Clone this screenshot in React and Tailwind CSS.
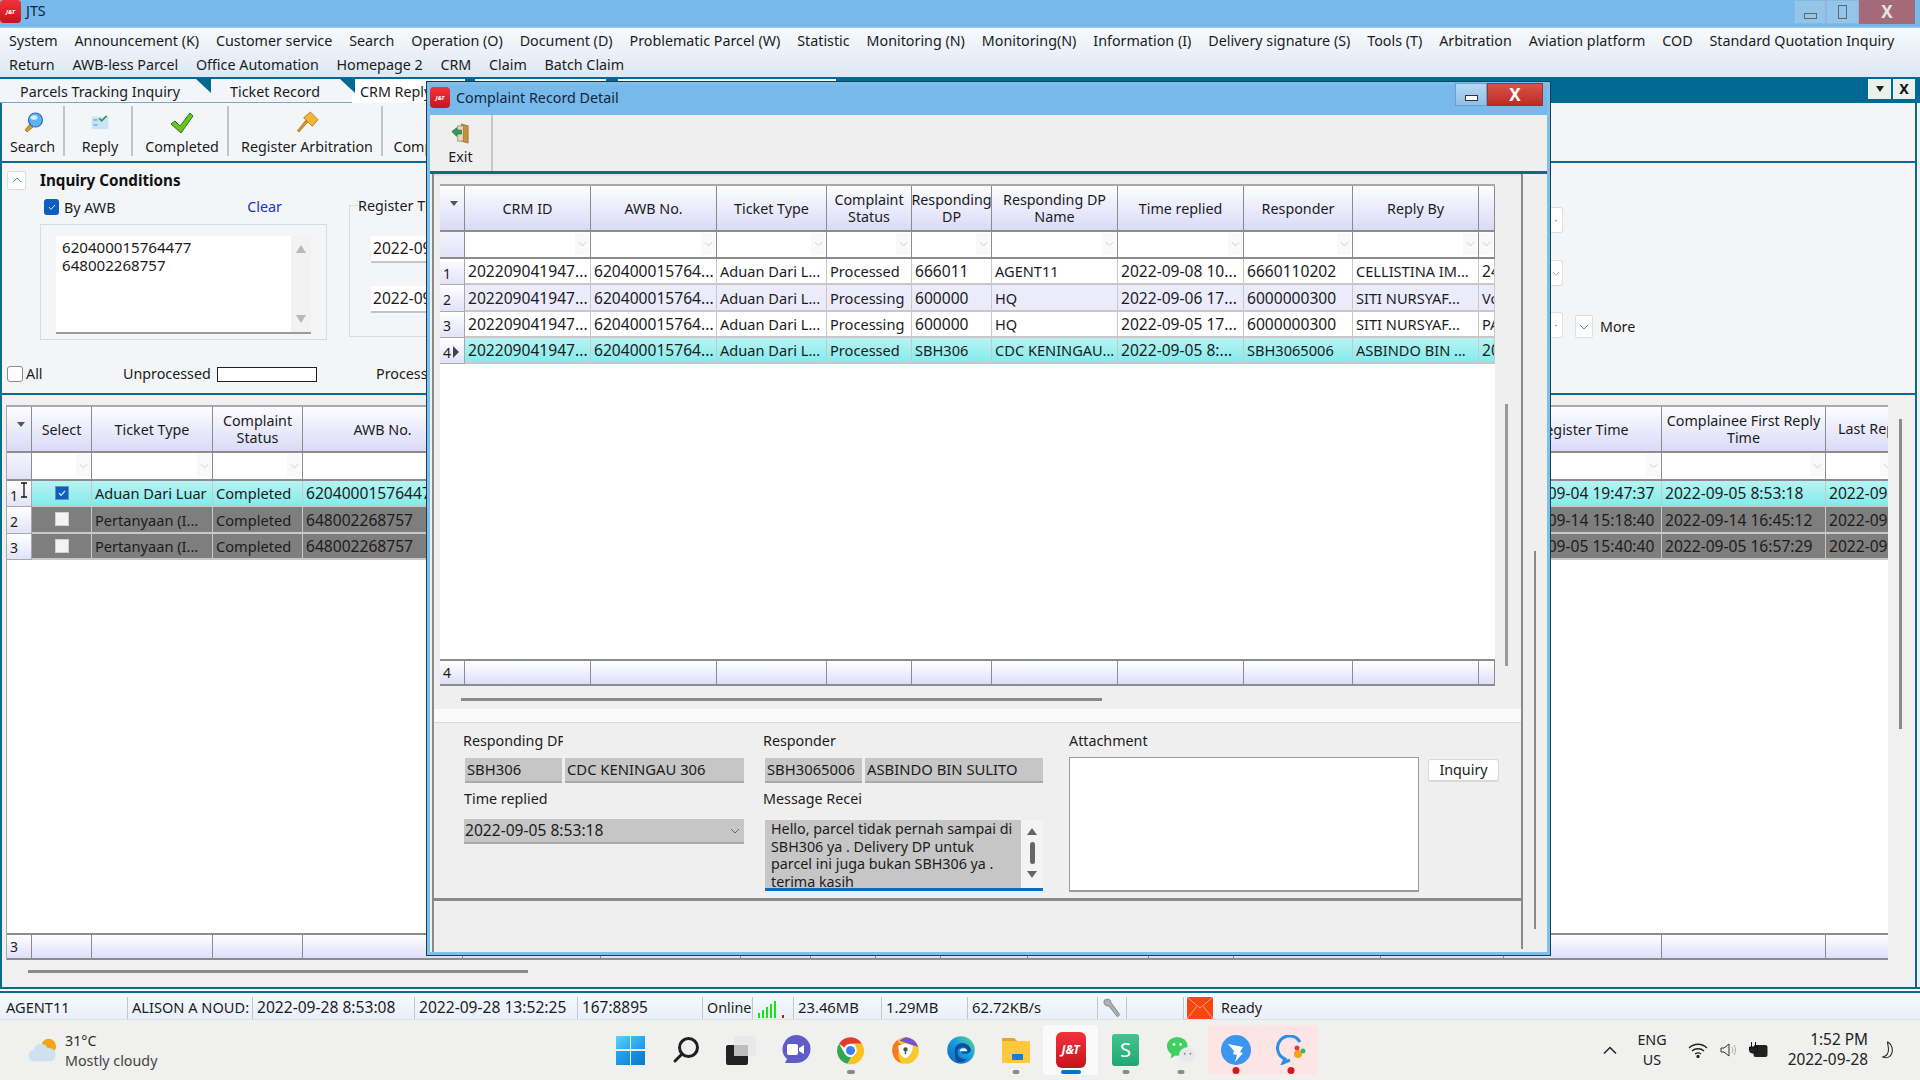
import React from "react";

const Chev = ({ className = "" }) => (
  <svg viewBox="0 0 10 6" className={className} fill="none" stroke="currentColor" strokeWidth="1"><path d="M1 1l4 4 4-4" /></svg>
);

const JT = ({ className = "", text = "text-[7px]" }) => (
  <div className={"flex items-center justify-center rounded-[4px] bg-gradient-to-b from-[#f2323c] to-[#c9101c] font-bold italic text-white leading-none " + text + " " + className}>J&amp;T</div>
);

const FilterCell = () => (
  <div className="relative border-r border-b-2 border-[#8c8c8c] bg-white">
    <div className="absolute right-[1px] top-[1px] bottom-[2px] w-[14px] flex items-center justify-center bg-[#f9f9f9] text-[#c9c9c9]"><Chev className="w-[9px] h-[6px]" /></div>
  </div>
);

const Head = ({ children, className = "" }) => (
  <div className={"flex items-center justify-center overflow-hidden text-center leading-[17px] border-r border-b-2 border-[#8c8c8c] bg-gradient-to-b from-[#fdfdff] to-[#dadaf8] " + className}>{children}</div>
);

const Corner = () => (
  <div className="flex justify-end pt-[15px] pr-[6px] border-r border-b-2 border-[#8c8c8c] bg-gradient-to-b from-[#fdfdff] to-[#dadaf8]">
    <div className="w-0 h-0 border-x-[4px] border-x-transparent border-t-[5px] border-t-[#555]" />
  </div>
);

const RowHead = ({ children, arrow }) => (
  <div className="flex items-center pl-[3px] pt-[3px] text-[14px] border-r border-b border-[#a8a8a8] bg-gradient-to-b from-white to-[#e2e2f8]">
    {children}
    {arrow && <span className="ml-[2px] w-0 h-0 border-y-[6px] border-y-transparent border-l-[6px] border-l-[#444]" />}
  </div>
);

const Cell = ({ children, tone = "" }) => (
  <div className={"overflow-hidden whitespace-nowrap pl-[3px] pt-[2px] flex items-center border-r border-b-2 border-[#c8c8c8] " + tone + (typeof children === "string" && /^\d/.test(children) ? " text-[15.6px]" : " text-[14.6px]")}>{children}</div>
);

const SEL = "bg-gradient-to-b from-[#b6f3f3] to-[#84ebeb]";

const FootCell = ({ children }) => (
  <div className="flex items-center pl-[3px] border-r border-t-2 border-b-2 border-[#8c8c8c] text-[14px] bg-gradient-to-b from-white to-[#dedefa]">{children}</div>
);

const Check = ({ on }) => on ? (
  <div className="w-[14px] h-[14px] flex items-center justify-center bg-[#0e5ec0] border border-[#6f8fb4]">
    <svg viewBox="0 0 10 10" className="w-[10px] h-[10px]" fill="none" stroke="#d5e8ff" strokeWidth="1.2"><path d="M2 5l2 2.4L8 3" /></svg>
  </div>
) : <div className="w-[14px] h-[14px] bg-[#f3f3f3] border border-[#d0d0d0]" />;

const MAIN_COLS = "grid-cols-[25px_60px_121px_90px_160px_138px_140px_70px_65px_65px_87px_121px_85px_147px_123px_158px_164px_70px]";

const mainHeads = ["Select", "Ticket Type", "Complaint Status", "AWB No.", "", "", "", "", "", "", "", "", "", "", "Register Time", "Complainee First Reply Time"];

const mainRows = [
  { sel: true, no: "1", on: true, t: "Aduan Dari Luar", a: "620400015764477", r: "2022-09-04 19:47:37", f: "2022-09-05 8:53:18" },
  { no: "2", t: "Pertanyaan (I...", a: "648002268757", r: "2022-09-14 15:18:40", f: "2022-09-14 16:45:12" },
  { no: "3", t: "Pertanyaan (I...", a: "648002268757", r: "2022-09-05 15:40:40", f: "2022-09-05 16:57:29" },
];

function MainGrid() {
  const blanks = Array.from({ length: 10 });
  return (
    <div className="flex-1 flex flex-col w-[1882px] ml-[4px] mt-[10px] border-t-2 border-l border-[#a8a8a8] bg-white overflow-hidden">
      <div className={"grid grid-rows-[46px_28px_26.3px_26.3px_26.3px] " + MAIN_COLS}>
        <Corner />
        {mainHeads.map((h, i) => <Head key={i}>{h}</Head>)}
        <div className="flex items-center pl-[12px] border-r border-b-2 border-[#8c8c8c] bg-gradient-to-b from-[#fdfdff] to-[#dadaf8] whitespace-nowrap">Last Reply</div>
        <div className="border-r border-b-2 border-[#8c8c8c] bg-gradient-to-b from-[#f4f4ff] to-[#e2e2f8]" />
        {mainHeads.map((_, i) => <FilterCell key={i} />)}
        <FilterCell />
        {mainRows.map((r) => {
          const tone = r.sel ? SEL : "bg-[#7e7e7e]";
          return (
            <React.Fragment key={r.no}>
              <RowHead>{r.no}</RowHead>
              <div className={"flex items-center justify-center border-r border-b-2 border-[#c8c8c8] " + tone}><Check on={r.on} /></div>
              <Cell tone={tone}>{r.t}</Cell>
              <Cell tone={tone}>Completed</Cell>
              <Cell tone={tone}>{r.a}</Cell>
              {blanks.map((_, i) => <Cell key={i} tone={tone} />)}
              <Cell tone={tone}>{r.r}</Cell>
              <Cell tone={tone}>{r.f}</Cell>
              <Cell tone={tone}>2022-09-05 17:00:00</Cell>
            </React.Fragment>
          );
        })}
      </div>
      <div className="flex-1" />
      <div className={"grid h-[27px] " + MAIN_COLS}>
        <FootCell>3</FootCell>
        {Array.from({ length: 17 }).map((_, i) => <FootCell key={i} />)}
      </div>
    </div>
  );
}

const DLG_COLS = "grid-cols-[25px_126px_126px_110px_85px_80px_126px_126px_109px_126px_16px]";
const dlgHeads = ["CRM ID", "AWB No.", "Ticket Type", "Complaint Status", "Responding DP", "Responding DP Name", "Time replied", "Responder", "Reply By", ""];
const dlgRows = [
  ["1", "Processed", "666011", "AGENT11", "2022-09-08 10...", "6660110202", "CELLISTINA IM...", "2400"],
  ["2", "Processing", "600000", "HQ", "2022-09-06 17...", "6000000300", "SITI NURSYAF...", "Vo"],
  ["3", "Processing", "600000", "HQ", "2022-09-05 17...", "6000000300", "SITI NURSYAF...", "PA"],
  ["4", "Processed", "SBH306", "CDC KENINGAU...", "2022-09-05 8:...", "SBH3065006", "ASBINDO BIN ...", "2022"],
];

function DialogGrid() {
  return (
    <div className="w-[1055px] h-[502px] flex flex-col bg-white border-t-2 border-[#a8a8a8] overflow-hidden">
      <div className={"grid grid-rows-[46px_27px_26.3px_26.3px_26.3px_26.3px] " + DLG_COLS}>
        <Corner />
        {dlgHeads.map((h, i) => (
          <Head key={i} className={i === 4 ? "whitespace-nowrap" : ""}>{i === 4 ? <span>Responding<br />DP</span> : h}</Head>
        ))}
        <div className="border-r border-b-2 border-[#8c8c8c] bg-gradient-to-b from-[#f4f4ff] to-[#e2e2f8]" />
        {dlgHeads.map((_, i) => <FilterCell key={i} />)}
        {dlgRows.map((r, n) => {
          const tone = n === 3 ? SEL : n === 1 ? "bg-[#ebebfb]" : "bg-white";
          return (
            <React.Fragment key={r[0]}>
              <RowHead arrow={n === 3}>{r[0]}</RowHead>
              <Cell tone={tone}>202209041947...</Cell>
              <Cell tone={tone}>620400015764...</Cell>
              <Cell tone={tone}>Aduan Dari L...</Cell>
              <Cell tone={tone}>{r[1]}</Cell>
              <Cell tone={tone}>{r[2]}</Cell>
              <Cell tone={tone}>{r[3]}</Cell>
              <Cell tone={tone}>{r[4]}</Cell>
              <Cell tone={tone}>{r[5]}</Cell>
              <Cell tone={tone}>{r[6]}</Cell>
              <Cell tone={tone}>{r[7]}</Cell>
            </React.Fragment>
          );
        })}
      </div>
      <div className="flex-1" />
      <div className={"grid h-[27px] " + DLG_COLS}>
        <FootCell>4</FootCell>
        {dlgHeads.map((_, i) => <FootCell key={i} />)}
      </div>
    </div>
  );
}

const ReadOnly = ({ className = "", children }) => (
  <div className={"h-[25px] flex items-center pl-[2px] text-[14.8px] bg-[#c6c6c6] border-b-2 border-[#a9a9a9] whitespace-nowrap overflow-hidden " + className}>{children}</div>
);

function Dialog() {
  return (
    <div className="absolute left-[427px] top-[82px] w-[1123px] h-[873px] flex flex-col bg-[#efefef] border-[3px] border-[#7fbfec] outline outline-1 outline-[#14404f]">
      <div className="h-[30px] shrink-0 flex items-start bg-[#78b9ec] relative">
        <JT className="w-[20px] h-[21px] mt-[2px]" text="text-[6px]" />
        <span className="ml-[6px] mt-[2px] text-[#12263a]">Complaint Record Detail</span>
        <div className="ml-auto mr-[4px] -mt-[2px] flex h-[23px]">
          <div className="w-[32px] flex items-end justify-center pb-[4px] bg-gradient-to-b from-[#b7d8f2] to-[#8dc0ea] border border-[#6f9fc6]"><span className="w-[13px] h-[6px] border border-[#333] bg-white" /></div>
          <div className="w-[56px] flex items-center justify-center font-bold text-white bg-gradient-to-b from-[#d9534b] to-[#bd2a25] border border-[#8e3a38] text-[17px]">X</div>
        </div>
      </div>
      <div className="h-[59px] shrink-0 flex border-b-[3px] border-[#0b6a8f]">
        <div className="w-[63px] flex flex-col items-center pt-[7px] border-r-2 border-[#c6c6c6]">
          <svg viewBox="0 0 24 24" className="w-[23px] h-[23px]">
            <path d="M13 2l7 2v18l-7-2z" fill="#c98f3a" stroke="#7c5a20" strokeWidth=".6" />
            <path d="M9 4h6v16H9z" fill="#e5d9ba" stroke="#7c6a40" strokeWidth=".6" />
            <path d="M3 10l5-4v2.5h5v4H8V15z" fill="#2fa055" stroke="#15592c" strokeWidth=".6" />
          </svg>
          <span className="mt-[2px] leading-[20px]">Exit</span>
        </div>
      </div>
      <div className="flex-1 flex min-h-0">
        <div className="ml-[2px] w-[1089px] border-l-2 border-[#8a8a8a] flex flex-col">
          <div className="h-[727px] shrink-0 flex flex-col border-t-2 border-[#e2e2e2] border-b-[3px] border-b-[#8a8a8a]">
            <div className="h-[543px] flex pl-[6px] pt-[8px]">
              <DialogGrid />
              <div className="w-[26px] pt-[220px] pl-[10px]">
                <div className="w-[3px] h-[262px] bg-[#9a9a9a]" />
              </div>
            </div>
            <div className="h-[3px] ml-[27px] w-[641px] bg-[#8a8a8a] -mt-[21px]" />
            <div className="mt-[8px] h-[14px] bg-[#fafafa] border-b border-[#dcdcdc]" />
            <div className="flex-1 flex pl-[29px] pt-[8px]">
              <div className="w-[300px]">
                <div className="w-[100px] overflow-hidden whitespace-nowrap leading-[20px]">Responding DP</div>
                <div className="mt-[7px] flex gap-[3px] ml-[2px]">
                  <ReadOnly className="w-[97px]">SBH306</ReadOnly>
                  <ReadOnly className="w-[179px]">CDC KENINGAU 306</ReadOnly>
                </div>
                <div className="mt-[6px] leading-[20px] ml-[1px]">Time replied</div>
                <div className="mt-[10px] ml-[1px] w-[280px] h-[25px] flex items-center justify-between pl-[1px] pr-[4px] text-[15.6px] bg-[#c6c6c6] border-b-2 border-[#a9a9a9]">
                  <span>2022-09-05 8:53:18</span>
                  <Chev className="w-[10px] h-[6px] text-[#666]" />
                </div>
              </div>
              <div className="w-[306px]">
                <div className="leading-[20px]">Responder</div>
                <div className="mt-[7px] flex gap-[3px] ml-[2px]">
                  <ReadOnly className="w-[97px]">SBH3065006</ReadOnly>
                  <ReadOnly className="w-[178px]">ASBINDO BIN SULITO</ReadOnly>
                </div>
                <div className="mt-[6px] w-[99px] overflow-hidden whitespace-nowrap leading-[20px]">Message Received</div>
                <div className="mt-[11px] ml-[2px] w-[278px] h-[71px] flex overflow-hidden bg-[#c6c6c6] border-b-[3px] border-[#0a6cc4]">
                  <div className="flex-1 pl-[6px] pr-[7px] leading-[17.5px]">Hello, parcel tidak pernah sampai di SBH306 ya . Delivery DP untuk parcel ini juga bukan SBH306 ya . terima kasih</div>
                  <div className="w-[22px] shrink-0 bg-[#f3f3f3] flex flex-col items-center pt-[8px]">
                    <span className="w-0 h-0 border-x-[5px] border-x-transparent border-b-[7px] border-b-[#666]" />
                    <span className="mt-[7px] w-[5px] h-[22px] rounded bg-[#666]" />
                    <span className="mt-[7px] w-0 h-0 border-x-[5px] border-x-transparent border-t-[7px] border-t-[#666]" />
                  </div>
                </div>
              </div>
              <div>
                <div className="leading-[20px]">Attachment</div>
                <div className="mt-[6px] flex">
                  <div className="w-[350px] h-[135px] bg-white border border-[#9a9a9a] border-b-2" />
                  <div className="ml-[9px] mt-[2px] w-[71px] h-[23px] flex items-center justify-center bg-white rounded-[3px] border border-[#d9d9d9] border-b-2">Inquiry</div>
                </div>
              </div>
            </div>
          </div>
        </div>
        <div className="w-[24px] flex">
          <div className="w-[2px] h-[775px] bg-[#8a8a8a]" />
          <div className="ml-[11px] mt-[377px] w-[2px] h-[378px] bg-[#8a8a8a]" />
        </div>
      </div>
    </div>
  );
}

const Tool = ({ label, w, children }) => (
  <div className={"flex flex-col items-center pt-[7px] " + w}>
    <div className="h-[25px] flex items-center">{children}</div>
    <span className="mt-[2px] leading-[20px] whitespace-nowrap">{label}</span>
  </div>
);

const Sep = () => <div className="w-[2px] h-[50px] mt-[3px] bg-[#c3c3c3]" />;

function Toolbar() {
  return (
    <div className="h-[60px] shrink-0 flex bg-[#f4f5f7] border-b-2 border-[#0b6a8f]">
      <Tool label="Search" w="w-[61px]">
        <svg viewBox="0 0 24 24" className="w-[24px] h-[24px]">
          <path d="M9 13l-5 6 2 2 6-5z" fill="#d89a2b" stroke="#8a5f14" strokeWidth=".7" />
          <circle cx="14.5" cy="9" r="7" fill="#5cb2f2" stroke="#2a6fc0" strokeWidth="1.2" />
          <ellipse cx="13" cy="6.5" rx="3.5" ry="2.3" fill="#d5eeff" />
        </svg>
      </Tool>
      <Sep />
      <Tool label="Reply" w="w-[66px] pl-[4px]">
        <svg viewBox="0 0 24 20" className="w-[20px] h-[17px]">
          <path d="M2 3h20v15H2z" fill="#c9e4f7" />
          <path d="M4 7h5M4 13h5" stroke="#3a9ad9" strokeWidth="1.4" />
          <path d="M11 5l3 3 6-6" fill="none" stroke="#2f9d4a" strokeWidth="2" />
        </svg>
      </Tool>
      <Sep />
      <Tool label="Completed" w="w-[94px] pl-[4px]">
        <svg viewBox="0 0 24 22" className="w-[24px] h-[22px]">
          <path d="M1 12l4-3 5 5L20 1l3 3-12 17z" fill="#6fc21a" stroke="#1d7a2d" strokeWidth="1" />
        </svg>
      </Tool>
      <Sep />
      <Tool label="Register Arbitration" w="w-[152px] pl-[4px]">
        <svg viewBox="0 0 24 24" className="w-[23px] h-[23px]">
          <path d="M12 12L3 22l-1.500-1.500L10 10z" fill="#d89a2b" stroke="#8a5f14" strokeWidth=".7" />
          <path d="M8 7l7-6 8 8-6 7z" fill="#f1b731" stroke="#a87014" strokeWidth=".8" />
        </svg>
      </Tool>
      <Sep />
      <Tool label="Complaint" w="w-[90px]"><span /></Tool>
    </div>
  );
}

function Inquiry() {
  return (
    <div className="h-[232px] shrink-0 bg-[#f4f5f7] border-b-2 border-[#0b6a8f] flex flex-col">
      <div className="h-[27px] pt-[7px] flex items-center pl-[5px]">
        <div className="w-[19px] h-[19px] flex items-center justify-center bg-white rounded-[2px] border border-[#dedede] text-[#2c9bd6]">
          <Chev className="w-[10px] h-[6px] rotate-180" />
        </div>
        <span className="ml-[14px] text-[15.2px] font-bold text-[#111]">Inquiry Conditions</span>
      </div>
      <div className="flex mt-[7px]">
        <div className="ml-[38px] w-[287px]">
          <div className="h-[20px] flex items-center pl-[4px]">
            <div className="w-[15px] h-[16px] rounded-[3px] bg-[#0e5ec0] flex items-center justify-center">
              <svg viewBox="0 0 10 10" className="w-[10px] h-[10px]" fill="none" stroke="#d5e8ff" strokeWidth="1"><path d="M2 5l2 2.400L8 3" /></svg>
            </div>
            <span className="ml-[5px] mt-[1px]">By AWB</span>
            <span className="ml-auto mr-[45px] text-[#1a2fd8]">Clear</span>
          </div>
          <div className="mt-[7px] h-[116px] border border-[#dbdbdb] pt-[11px] px-[15px]">
            <div className="h-[98px] flex bg-white border-b-2 border-[#9a9a9a]">
              <div className="flex-1 pl-[6px] pt-[2px] leading-[18px] text-[15.1px]">620400015764477<br />648002268757</div>
              <div className="w-[20px] bg-[#f2f2f2] flex flex-col items-center justify-between py-[9px]">
                <span className="w-0 h-0 border-x-[5px] border-x-transparent border-b-[8px] border-b-[#b9b9b9]" />
                <span className="w-0 h-0 border-x-[5px] border-x-transparent border-t-[8px] border-t-[#b9b9b9]" />
              </div>
            </div>
          </div>
        </div>
        <div className="ml-[22px] w-[100px] h-[132px] mt-[8px] border border-[#dbdbdb] border-r-0 pl-[21px] relative">
          <span className="absolute -top-[10px] left-[8px] bg-[#f4f5f7] whitespace-nowrap leading-[20px]">Register Time</span>
          <div className="mt-[30px] h-[27px] flex items-center pl-[2px] text-[15.6px] bg-white border-b-2 border-[#c5c5c5]">2022-09</div>
          <div className="mt-[23px] h-[27px] flex items-center pl-[2px] text-[15.6px] bg-white border-b-2 border-[#c5c5c5]">2022-09</div>
        </div>
        <div className="ml-[1101px] w-[13px] flex flex-col mt-[10px]">
          <div className="h-[26px] bg-white rounded-r-[3px] border border-l-0 border-[#dedede] text-[#666] text-[10px] flex items-center justify-center">·</div>
          <div className="mt-[27px] h-[26px] bg-white rounded-r-[3px] border border-l-0 border-[#dedede] text-[#999] flex items-center justify-center"><Chev className="w-[8px] h-[5px]" /></div>
          <div className="mt-[26px] h-[26px] bg-white rounded-r-[3px] border border-l-0 border-[#dedede] text-[#666] text-[10px] flex items-center justify-center">·</div>
        </div>
        <div className="ml-[12px] mt-[118px] flex items-center h-[23px]">
          <div className="w-[18px] h-[23px] bg-white rounded-[2px] border border-[#dedede] text-[#2c9bd6] flex items-center justify-center"><Chev className="w-[10px] h-[6px]" /></div>
          <span className="ml-[7px]">More</span>
        </div>
      </div>
      <div className="flex items-center h-[20px] mt-[24px] pl-[5px]">
        <div className="w-[116px] flex items-center">
          <div className="w-[16px] h-[16px] rounded-[3px] bg-white border border-[#8a8a8a]" />
          <span className="ml-[3px]">All</span>
        </div>
        <span className="w-[94px]">Unprocessed</span>
        <div className="w-[100px] h-[15px] bg-white border border-[#222]" />
        <span className="ml-[59px] whitespace-nowrap">Process</span>
      </div>
    </div>
  );
}

const MENU1 = ["System", "Announcement (K)", "Customer service", "Search", "Operation (O)", "Document (D)", "Problematic Parcel (W)", "Statistic", "Monitoring (N)", "Monitoring(N)", "Information (I)", "Delivery signature (S)", "Tools (T)", "Arbitration", "Aviation platform", "COD", "Standard Quotation Inquiry"];
const MENU2 = ["Return", "AWB-less Parcel", "Office Automation", "Homepage 2", "CRM", "Claim", "Batch Claim"];

const Notch = ({ className }) => (
  <span className={"absolute top-0 w-[15px] h-[14px] bg-[#006a94] [clip-path:polygon(0_0,100%_0,100%_100%)] " + className} />
);

function Tabs() {
  return (
    <div className="h-[26px] shrink-0 flex items-end bg-[#006a94]">
      <div className="relative w-[219px] h-[24px] flex items-center pl-[20px] pt-[2px] bg-[#f2f5f9] border-b border-[#7fa7bd]">
        Parcels Tracking Inquiry
        <Notch className="left-[196px]" />
      </div>
      <div className="relative w-[133px] h-[24px] flex items-center pl-[11px] pt-[2px] bg-[#f2f5f9] border-b border-[#7fa7bd]">
        Ticket Record
        <Notch className="left-[121px]" />
      </div>
      <div className="w-[113px] h-[24px] flex items-center pl-[8px] pt-[2px] bg-white whitespace-nowrap">CRM Reply</div>
      <div className="ml-[10px] w-[131px] h-[24px] bg-white" />
      <div className="ml-[12px] w-[218px] h-[24px] bg-white" />
      <div className="ml-auto flex gap-[2px] mr-[5px] self-start mt-[2px]">
        <div className="w-[23px] h-[20px] flex items-center justify-center bg-[#e8f1ec]"><span className="w-0 h-0 border-x-[4px] border-x-transparent border-t-[6px] border-t-[#222]" /></div>
        <div className="w-[22px] h-[20px] flex items-center justify-center bg-[#e8f1ec] font-bold text-[#111]">X</div>
      </div>
    </div>
  );
}

function Status() {
  const items = [
    ["w-[127px] text-[14.6px]", "AGENT11"],
    ["w-[125px] text-[14.6px]", "ALISON A NOUD:"],
    ["w-[162px] text-[15.6px]", "2022-09-28 8:53:08"],
    ["w-[163px] text-[15.6px]", "2022-09-28 13:52:25"],
    ["w-[125px] text-[15.4px]", "167:8895"],
  ];
  return (
    <div className="h-[27px] shrink-0 flex items-center pt-[3px] bg-gradient-to-b from-[#f7fbff] to-[#e8eff7] border-b border-[#e2e2e2] whitespace-nowrap">
      {items.map(([w, t], i) => (
        <div key={i} className={"h-[22px] flex items-center overflow-hidden " + w + (i === 0 ? " pl-[6px]" : " pl-[4px] border-l border-[#c6c6c6]")}>{t}</div>
      ))}
      <div className="w-[50px] h-[22px] flex items-center pl-[4px] border-l border-[#c6c6c6]">Online</div>
      <div className="w-[41px] h-[22px] flex items-end gap-[2px] pl-[5px] pb-[1px] border-l border-[#c6c6c6]">
        <span className="w-[2px] h-[5px] bg-[#14e514]" />
        <span className="w-[2px] h-[8px] bg-[#14e514]" />
        <span className="w-[2px] h-[11px] bg-[#14e514]" />
        <span className="w-[2px] h-[14px] bg-[#14e514]" />
        <span className="w-[2px] h-[17px] bg-[#14e514]" />
        <span className="ml-[4px] w-[2px] h-[3px] bg-[#e01010]" />
      </div>
      <div className="w-[88px] h-[22px] flex items-center pl-[4px] text-[14.8px] border-l border-[#c6c6c6]">23.46MB</div>
      <div className="w-[86px] h-[22px] flex items-center pl-[4px] text-[14.8px] border-l border-[#c6c6c6]">1.29MB</div>
      <div className="w-[130px] h-[22px] flex items-center pl-[4px] text-[14.8px] border-l border-[#c6c6c6]">62.72KB/s</div>
      <div className="w-[30px] h-[22px] flex items-center justify-center border-x border-[#c6c6c6]">
        <svg viewBox="0 0 20 20" className="w-[22px] h-[22px]"><path d="M3 3c3-2 6-1 6 2l8 11-2 2L7 8C4 9 2 6 3 3z" fill="#b0b0b0" stroke="#777" strokeWidth=".8" /></svg>
      </div>
      <div className="w-[56px]" />
      <div className="h-[22px] flex items-center pl-[2px] border-l border-[#c6c6c6]">
        <svg viewBox="0 0 28 24" className="w-[28px] h-[24px]">
          <rect x="1" y="1" width="26" height="22" rx="2" fill="#f2470f" />
          <path d="M1 1l13 11L27 1M1 23l10-13M27 23L17 10" fill="none" stroke="#ffb199" strokeWidth=".8" />
        </svg>
      </div>
      <span className="ml-[7px]">Ready</span>
    </div>
  );
}

const Slot = ({ children, dot, active, tint }) => (
  <div className={"relative w-[55px] h-[50px] flex items-center justify-center rounded-[4px] " + (active ? "bg-[#fafafa]" : tint ? "bg-[#fde5e5]" : "")}>
    {children}
    {dot && <span className={"absolute bottom-[1px] left-1/2 -translate-x-1/2 h-[4px] rounded-full " + dot} />}
  </div>
);

function TaskIcons() {
  return (
    <div className="flex items-center">
      <Slot>
        <div className="w-[29px] h-[29px] grid grid-cols-2 gap-[1.5px]">
          <span className="bg-gradient-to-br from-[#5ed2fb] to-[#23a6ee]" />
          <span className="bg-gradient-to-br from-[#3fbef6] to-[#1a96e6]" />
          <span className="bg-gradient-to-br from-[#2aa8ee] to-[#0f87da]" />
          <span className="bg-gradient-to-br from-[#1b93e4] to-[#0a78cf]" />
        </div>
      </Slot>
      <Slot>
        <svg viewBox="0 0 28 28" className="w-[28px] h-[28px]" fill="none" stroke="#202020" strokeWidth="3"><circle cx="16.500" cy="11.500" r="9" /><path d="M10 18l-7 7" strokeLinecap="round" /></svg>
      </Slot>
      <Slot>
        <svg viewBox="0 0 30 29" className="w-[30px] h-[29px]">
          <rect x="0" y="9" width="22" height="20" rx="2" fill="#222" />
          <rect x="8" y="0" width="22" height="20" rx="2" fill="#e8e8e8" fillOpacity=".85" />
          <rect x="8" y="9" width="14" height="11" fill="#bdbdbd" />
        </svg>
      </Slot>
      <Slot>
        <svg viewBox="0 0 30 30" className="w-[30px] h-[30px]">
          <path d="M15 0a14.500 14 0 0 1 0 28H4l2-4A14.500 14 0 0 1 15 0z" fill="#5f5cc9" />
          <rect x="6" y="9" width="11" height="11" rx="2" fill="#fff" />
          <path d="M18 13l5-3v9l-5-3z" fill="#fff" />
        </svg>
      </Slot>
      <Slot dot="w-[8px] bg-[#8a8a8a]">
        <svg viewBox="0 0 48 48" className="w-[29px] h-[29px]">
          <path d="M24 2a22 22 0 0 1 19 11H24a11 11 0 0 0-10 6L5 13A22 22 0 0 1 24 2z" fill="#e33b2e" />
          <path d="M5 13l9.500 16.500a11 11 0 0 0 11 5.500L19 46A22 22 0 0 1 5 13z" fill="#2fa84f" />
          <path d="M43 13a22 22 0 0 1-24 33l9-13a11 11 0 0 0 5-15 11 11 0 0 0-2-5z" fill="#fbc21b" />
          <circle cx="24" cy="24" r="10" fill="#fff" />
          <circle cx="24" cy="24" r="7.500" fill="#3e82f1" />
        </svg>
      </Slot>
      <Slot>
        <svg viewBox="0 0 48 48" className="w-[29px] h-[29px]">
          <circle cx="24" cy="24" r="22" fill="#f7ca2c" />
          <path d="M24 2a22 22 0 0 1 21 16L14 8A22 22 0 0 1 24 2z" fill="#7a4fd6" />
          <path d="M10 7a22 22 0 0 0 8 38c-8-8-8-20 0-30z" fill="#f47b20" />
          <path d="M24 12l12 4c0 10-4 17-12 21-8-4-12-11-12-21z" fill="#fff" />
          <circle cx="24" cy="22" r="3.500" fill="#4d4d4d" />
          <rect x="22.800" y="23" width="2.400" height="7" fill="#4d4d4d" />
        </svg>
      </Slot>
      <Slot>
        <svg viewBox="0 0 48 48" className="w-[30px] h-[30px]">
          <defs>
            <linearGradient id="edgeA" x1="0" y1="1" x2="1" y2="0"><stop offset="0" stopColor="#0b62b8" /><stop offset=".55" stopColor="#1a9fe0" /><stop offset="1" stopColor="#5edb7a" /></linearGradient>
          </defs>
          <circle cx="24" cy="24" r="22" fill="url(#edgeA)" />
          <path d="M14 24c0-7 6-11 12-11 7 0 12 4 14 10 0 5-5 7-10 7-4 0-6-2-6-4h10c0-4-4-6-8-6-6 0-9 6-7 12 2 5 9 8 15 6-5 6-13 7-18 3-2-5-2-12-2-17z" fill="#0c4f9e" />
          <path d="M22 26c0-3 3-5 6-5s6 2 6 5z" fill="#eafaf2" />
        </svg>
      </Slot>
      <Slot dot="w-[7px] bg-[#8a8a8a]">
        <svg viewBox="0 0 30 30" className="w-[30px] h-[30px]">
          <path d="M1 3h12l3 3h13v22H1z" fill="#ffc83d" />
          <path d="M1 3h12l3 3H1z" fill="#e8a526" />
          <rect x="11" y="19" width="11" height="6" rx="1" fill="#0a7fd6" />
        </svg>
      </Slot>
      <Slot active dot="w-[20px] bg-[#0a6fd0]">
        <JT className="w-[30px] h-[36px] rounded-[6px]" text="text-[12px]" />
      </Slot>
      <Slot dot="w-[7px] bg-[#8a8a8a]">
        <div className="w-[27px] h-[32px] rounded-[3px] bg-gradient-to-b from-[#42c48f] to-[#1ea873] flex items-center justify-center text-white text-[20px] leading-none">S</div>
      </Slot>
      <Slot dot="w-[7px] bg-[#8a8a8a]">
        <svg viewBox="0 0 32 32" className="w-[30px] h-[30px]">
          <ellipse cx="12" cy="12" rx="11" ry="10" fill="#3fd05f" />
          <path d="M6 19l-1 6 6-4z" fill="#3fd05f" />
          <ellipse cx="23" cy="21" rx="9" ry="8" fill="#e9e9e9" />
          <circle cx="8.500" cy="10" r="1.500" fill="#fff" /><circle cx="15.500" cy="10" r="1.500" fill="#fff" />
          <circle cx="20" cy="20" r="1" fill="#888" /><circle cx="26" cy="20" r="1" fill="#888" />
        </svg>
      </Slot>
      <Slot tint dot="w-[7px] h-[7px] bg-[#d01c1c]">
        <svg viewBox="0 0 30 30" className="w-[30px] h-[30px]">
          <circle cx="15" cy="15" r="15" fill="#3b96ee" />
          <path d="M7 9l15 3-3 5 3 1-8 9 2-7-4-1 1-3z" fill="#fff" />
        </svg>
      </Slot>
      <Slot tint dot="w-[7px] h-[7px] bg-[#d01c1c]">
        <svg viewBox="0 0 30 30" className="w-[30px] h-[30px]" fill="none">
          <path d="M24 7A12 12 0 1 0 9 24l-2 4 7-3" stroke="#2b8fe8" strokeWidth="3" />
          <circle cx="22" cy="19" r="4" fill="#f7a11a" />
          <circle cx="27" cy="16" r="2.500" fill="#35b86a" />
          <circle cx="21" cy="13" r="2.500" fill="#e53c3c" />
        </svg>
      </Slot>
    </div>
  );
}

function Taskbar() {
  return (
    <div className="flex-1 flex items-center bg-[#f0f0ef] whitespace-nowrap">
      <div className="w-[603px] flex items-center pl-[28px]">
        <svg viewBox="0 0 32 30" className="w-[30px] h-[28px]">
          <circle cx="22" cy="11" r="8" fill="#f3a41b" />
          <path d="M7 27a6 6 0 0 1-1-12 8 8 0 0 1 15-2 7 7 0 0 1 3 14z" fill="#cfe0ee" />
        </svg>
        <div className="ml-[7px] pt-[2px] leading-[20px] text-[#2e2e2e]">31°C<br /><span className="text-[#444]">Mostly cloudy</span></div>
      </div>
      <TaskIcons />
      <div className="ml-[284px] w-[14px]">
        <Chev className="w-[16px] h-[9px] rotate-180 text-[#222]" />
      </div>
      <div className="ml-[20px] w-[32px] text-center leading-[20px] text-[#222]">ENG<br />US</div>
      <div className="ml-[20px] flex items-center gap-[11px]">
        <svg viewBox="0 0 20 16" className="w-[20px] h-[16px]" fill="none" stroke="#222" strokeWidth="1.300"><path d="M1 6c5-5 13-5 18 0M4 9c3-3 9-3 12 0M7 12c2-1.500 4-1.500 6 0" /><circle cx="10" cy="14.500" r="1" fill="#222" /></svg>
        <svg viewBox="0 0 18 18" className="w-[18px] h-[18px]" fill="none" stroke="#333" strokeWidth="1"><path d="M2 7h3l5-4v12l-5-4H2z" /><path d="M13 6c1 2 1 4 0 6M15 4c2 3 2 7 0 10" stroke="#aaa" /></svg>
        <svg viewBox="0 0 20 18" className="w-[21px] h-[18px]"><rect x="5" y="4" width="14" height="12" rx="2" fill="#222" /><path d="M3 1v5M7 1v5M1 6h8v3a3 3 0 0 1-3 3H4a3 3 0 0 1-3-3z" stroke="#111" fill="#222" /></svg>
      </div>
      <div className="ml-[12px] w-[87px] text-right leading-[20px] text-[15.4px] text-[#222]">1:52 PM<br />2022-09-28</div>
      <svg viewBox="0 0 18 22" className="ml-[12px] w-[17px] h-[21px]" fill="none" stroke="#222" strokeWidth="1.100"><path d="M8 2c6 3 7 13 1 16-2 1-4 1-6 0 4-1 6-4 6-8 0-3-1-6-1-8z" /></svg>
    </div>
  );
}

export default function App() {
  return (
    <div className="relative w-[1920px] h-[1080px] overflow-hidden bg-[#f0f0f0] font-['Noto_Sans',sans-serif] text-[14.3px] text-[#1c1c1c] flex flex-col">
      <div className="h-[28px] shrink-0 flex bg-[#78b9ec] border-b border-[#9cc7e6]">
        <JT className="w-[21px] h-[23px]" text="text-[6px]" />
        <span className="ml-[5px] text-[#12263a]">JTS</span>
        <div className="ml-auto mr-[5px] flex h-[24px]">
          <div className="w-[32px] flex items-end justify-center pb-[4px] bg-[#93c4ea] border border-[#8ab7da]"><span className="w-[13px] h-[6px] border border-[#666]" /></div>
          <div className="w-[33px] flex items-center justify-center bg-[#93c4ea] border border-[#8ab7da]"><span className="w-[9px] h-[14px] border border-[#666]" /></div>
          <div className="w-[56px] flex items-center justify-center font-bold text-[#e5e5e5] bg-[#a46a78] text-[17px]">X</div>
        </div>
      </div>
      <div className="h-[49px] shrink-0 bg-gradient-to-b from-[#f7fafd] to-[#dee7f2] whitespace-nowrap">
        <div className="h-[25px] flex items-center gap-[16.9px] pl-[9px]">{MENU1.map((m, i) => <span key={i}>{m}</span>)}</div>
        <div className="h-[23px] flex items-center gap-[17.7px] pl-[9px]">{MENU2.map((m) => <span key={m}>{m}</span>)}</div>
      </div>
      <Tabs />
      <div className="h-[884px] shrink-0 flex flex-col border-x-2 border-[#0b6a8f] mr-[3px]">
        <Toolbar />
        <Inquiry />
        <div className="flex-1 flex flex-col min-h-0 relative">
          <MainGrid />
          <div className="h-[27px] shrink-0 pt-[10px] pl-[26px]"><div className="w-[500px] h-[3px] bg-[#8a8a8a]" /></div>
          <div className="absolute left-[1897px] top-[24px] w-[3px] h-[310px] bg-[#8a8a8a]" />
          <svg viewBox="0 0 8 16" className="absolute left-[18px] top-[87px] w-[8px] h-[16px]" fill="none" stroke="#111" strokeWidth="1.300"><path d="M1 1h6M1 15h6M4 1v14" /></svg>
        </div>
      </div>
      <div className="h-[6px] shrink-0 bg-white border-y-2 border-[#0b6a8f]" />
      <Status />
      <Taskbar />
      <Dialog />
    </div>
  );
}
